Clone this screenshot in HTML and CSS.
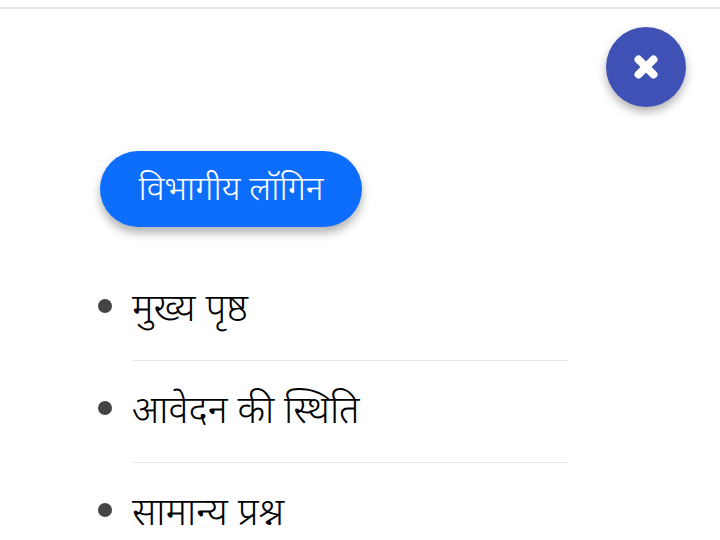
FILE: index.html
```html
<!DOCTYPE html>
<html lang="hi">
  <head>
    <meta charset="UTF-8" />
    <title>मेनू</title>
    <link rel="stylesheet" href="styles.css">
  </head>
  <body>
    <div class="top-line"></div>
    <div class="close-row">
      <button class="close">
        <svg width="28" height="28" viewBox="0 0 28 28">
          <path d="M6.5 6.5 L21.5 21.5 M21.5 6.5 L6.5 21.5" stroke="#fff" stroke-width="8" stroke-linecap="round" />
        </svg>
      </button>
    </div>
    <a class="login" href="#">विभागीय लॉगिन</a>
    <ul class="menu">
      <li>मुख्य पृष्ठ</li>
      <li>आवेदन की स्थिति</li>
      <li>सामान्य प्रश्न</li>
    </ul>
  </body>
</html>
```

FILE: styles.css
```css
* {
  margin: 0;
  padding: 0;
  box-sizing: border-box;
}
html,
body {
  height: 540px;
  overflow: hidden;
}
body {
  background: #fff;
  font-family: "Noto Sans", "Liberation Serif", "DejaVu Sans", sans-serif;
  font-weight: 300;
  color: #000;
}
.top-line {
  height: 9px;
  border-bottom: 2px solid #e4e4e4;
}
.close-row {
  display: flex;
  justify-content: flex-end;
  padding: 18px 34px 0 0;
}
.close {
  width: 80px;
  height: 80px;
  border: 0;
  border-radius: 50%;
  background: #3f51b5;
  box-shadow: 0 5px 10px rgba(0, 0, 0, 0.3);
  display: flex;
  align-items: center;
  justify-content: center;
}
.login {
  display: flex;
  align-items: center;
  justify-content: center;
  width: 262px;
  height: 76px;
  margin: 44px 0 0 100px;
  padding-bottom: 5px;
  border-radius: 38px;
  background: #0d6efd;
  color: #fff;
  font-size: 34px;
  text-decoration: none;
  box-shadow: 0 6px 10px rgba(0, 0, 0, 0.3);
}
.menu {
  margin: 32px 0 0 132px;
  width: 436px;
  font-size: 38px;
  list-style: none;
}
.menu li {
  display: flex;
  align-items: center;
  height: 102px;
  padding-bottom: 8px;
  border-bottom: 1px solid #e8e8e8;
}
.menu li::before {
  content: "";
  flex: none;
  width: 14px;
  height: 14px;
  margin: 0 20px 0 -34px;
  border-radius: 50%;
  background: #444;
}
.menu li:last-child {
  border-bottom: 0;
}
```
